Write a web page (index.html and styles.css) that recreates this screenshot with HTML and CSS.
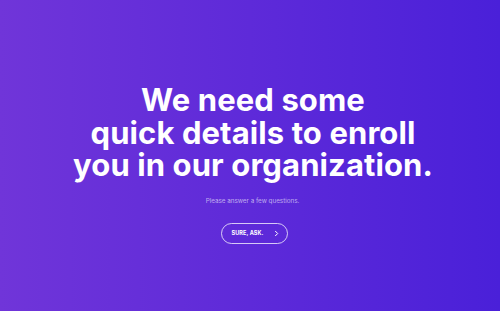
FILE: index.html
```html
<!DOCTYPE html>
<html lang="en">
    <head>
        <meta charset="utf-8">
        <link rel="stylesheet" href="styles.css">
    </head>
    <body>
        <div class="intro">
            <h1 class="title">We need some<br>quick details to enroll<br>you in our organization.</h1>
            <p class="sub">Please answer a few questions.</p>
            <a class="go" href="#">
                <span>SURE, ASK.</span>
                <svg width="5" height="7" viewBox="0 0 5 7"><path d="M1.2 1 L3.7 3.5 L1.2 6" fill="none" stroke="#fff" stroke-width="1"/></svg>
            </a>
        </div>
    </body>
</html>
```

FILE: styles.css
```css
*{margin:0;padding:0;box-sizing:border-box;}
html,body{height:100%;}
body{
    background:linear-gradient(90deg,#7035d9 0%,#5e2ad9 50%,#4a20d9 100%);
    font-family:Inter,"Liberation Sans",sans-serif;color:#fff;overflow:hidden;
}
.intro{display:flex;flex-direction:column;align-items:center;padding-top:84px;}
.title{font-size:31px;line-height:32.5px;font-weight:700;text-align:center;letter-spacing:0.1px;padding-left:6px;}
.sub{margin-top:15px;font-size:6.3px;color:rgba(255,255,255,0.6);padding-left:5px;}
.go{margin-top:18px;margin-left:9px;width:67px;height:21px;border:1px solid rgba(255,255,255,0.75);border-radius:11px;
    display:flex;align-items:center;justify-content:center;gap:11px;text-decoration:none;color:#fff;
    font-size:5.5px;font-weight:700;letter-spacing:0.1px;padding-left:2px;}
.go svg{display:block;}
```
